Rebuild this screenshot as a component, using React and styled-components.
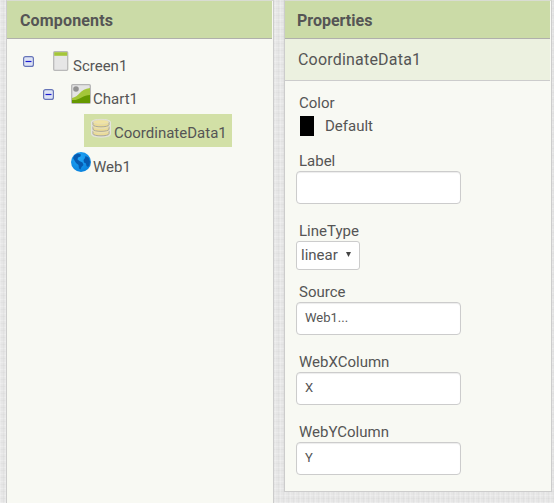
import React from "react";
import styled, { createGlobalStyle } from "styled-components";

const Global = createGlobalStyle`
  * { box-sizing: border-box; }
  body { margin: 0; overflow: hidden; font-family: Roboto, "Liberation Sans", sans-serif; color: #555; }
`;

const Page = styled.div`
  display: grid;
  grid-template-columns: 268px 268px;
  column-gap: 10px;
  align-items: start;
  width: 554px;
  height: 503px;
  overflow: hidden;
  padding-left: 6px;
  background-color: #e6e6e6;
  background-image:
    repeating-linear-gradient(90deg, rgba(255,255,255,.22) 0 1px, transparent 1px 3px, rgba(190,190,190,.12) 3px 4px, transparent 4px 5px),
    repeating-linear-gradient(0deg, rgba(255,255,255,.22) 0 1px, transparent 1px 4px, rgba(190,190,190,.12) 4px 5px, transparent 5px 7px);
`;

const Panel = styled.section`
  height: ${(p) => p.$height}px;
  background: #f8f9f3;
  border: 1px solid #ccc;
  border-top-color: #d9dcd2;
  padding-right: 1px;
`;

const Header = styled.h2`
  margin: 0;
  height: 38px;
  padding-left: ${(p) => p.$inset || 12}px;
  background: #cbdba7;
  border-bottom: 1px solid #b0b0ac;
  font-size: 16px;
  font-weight: 700;
  line-height: 39px;
  letter-spacing: ${(p) => p.$spacing || 0}px;
`;

const Subheader = styled.div`
  height: 42px;
  padding-left: 13px;
  background: #ecf1e0;
  border-bottom: 1px solid #ccc;
  font-size: 16px;
  line-height: 42px;
  letter-spacing: 0.2px;
`;

const Tree = styled.div`
  padding-top: 7px;
`;

const Node = styled.div`
  display: flex;
  align-items: flex-start;
  height: ${(p) => p.$height || 33}px;
  padding-left: ${(p) => p.$indent}px;
`;

const Toggle = styled.svg`
  width: 11px;
  height: 11px;
  margin: 10px 11px 0 0;
`;

const Item = styled.div`
  display: flex;
  height: 33px;
  padding: ${(p) => (p.$selected ? "4px 5px 0 7px" : "5px 6px 0")};
  background: ${(p) => (p.$selected ? "#d2e0a6" : "transparent")};
`;

const Icon = styled.svg`
  width: 20px;
  height: 20px;
  flex: none;
`;

const NodeName = styled.span`
  padding: 5px 0 0 ${(p) => p.$gap || 2}px;
  font-size: 15px;
  line-height: 20px;
`;

const Form = styled.div`
  padding: 14px 0 0 11px;
`;

const Field = styled.div`
  height: ${(p) => p.$height}px;
`;

const Label = styled.label`
  display: block;
  padding-left: 3px;
  height: 18px;
  font-size: 15px;
  line-height: 16px;
`;

const ColorValue = styled.div`
  display: flex;
  align-items: center;
  height: 26px;
  gap: 11px;
  padding-left: 4px;
  font-size: 15px;
`;

const Swatch = styled.span`
  width: 14px;
  height: 20px;
  background: #000;
`;

const Input = styled.div`
  width: 165px;
  height: 33px;
  padding-left: 8px;
  background: #fff;
  border: 1px solid #ccc;
  border-radius: 4px;
  box-shadow: inset 0 1px 1px rgba(0, 0, 0, 0.075);
  font-size: 13px;
  line-height: 29px;
`;

const Select = styled.div`
  display: flex;
  align-items: center;
  width: 64px;
  height: 29px;
  padding: 0 0 2px 4px;
  gap: 8px;
  background: #fff;
  border: 1px solid #ccc;
  border-radius: 3px;
  font-size: 15px;
`;

const Arrow = styled.svg`
  width: 5px;
  height: 5px;
`;

const Collapse = () => (
  <Toggle viewBox="0 0 11 11">
    <rect x="0.6" y="0.6" width="9.8" height="9.8" rx="2" fill="#dde3f4" stroke="#6674b8" strokeWidth="1.2" />
    <path d="M2.5 5.5h6" stroke="#1c1cd0" strokeWidth="1.2" />
  </Toggle>
);

const ScreenIcon = () => (
  <Icon viewBox="0 0 20 20">
    <rect x="2.7" y="0.7" width="14" height="18.6" rx="1" fill="#e6e6e6" stroke="#b9b9b9" strokeWidth="1.3" />
    <path d="M3.2 1.2h13v3.6h-13z" fill="#a4c639" />
  </Icon>
);

const ChartIcon = () => (
  <Icon viewBox="0 0 20 20">
    <rect x="0.7" y="0.7" width="18.6" height="18.6" rx="1" fill="#e4e4e4" stroke="#b5b5b5" strokeWidth="1.3" />
    <circle cx="5" cy="5" r="2.8" fill="#929292" />
    <path d="M1 14C8 13 9 5 19 4v15H1z" fill="#a4c639" />
    <path d="M1 19v-3c7 1 11-5 18-5v8z" fill="#669900" />
  </Icon>
);

const DataIcon = () => (
  <Icon viewBox="0 0 20 20">
    <path d="M.5 4C.5.5 19.500.5 19.500 4v12.500c0 3.500-19 3.500-19 0z" fill="#dddcd0" stroke="#e4e4de" />
    {[13, 8.5, 4].map((y) => (
      <g key={y}>
        <path d={`M2 ${y}v2.600c0 3 16 3 16 0v-2.600z`} fill="#ecdc94" stroke="#aaa89c" strokeWidth="1" />
        <ellipse cx="10" cy={y} rx="8" ry="2.2" fill="#f0e3a2" stroke="#dcd9c8" strokeWidth="0.6" />
      </g>
    ))}
  </Icon>
);

const WebIcon = () => (
  <Icon viewBox="0 0 20 20">
    <defs>
      <radialGradient id="ocean" cx="0.4" cy="0.3" r="0.75">
        <stop offset="0" stopColor="#22a8f8" />
        <stop offset="1" stopColor="#0880dc" />
      </radialGradient>
    </defs>
    <circle cx="10" cy="10" r="10" fill="url(#ocean)" />
    <path
      d="M2 6l1.500-3 3.500-1.500 3 1-.5 2-2.500 1-.5 2 2 1.500 3 1.500 1 2.500-2 2-1 2.500-1.500-1-.5-3.500-2.500-2-1.500-2.500zM14.500 4l3 1.500 1.500 4-.5 3.500-1.500 2-1.500-1-.5-2.500-2-1-.5-2.500 1.500-2z"
      fill="#075bb0"
    />
  </Icon>
);

export default function App() {
  return (
    <>
      <Global />
      <Page>
        <Panel $height={520}>
          <Header $inset={13} $spacing={0.15}>Components</Header>
          <Tree>
            <Node $indent={16}><Collapse /><Item><ScreenIcon /><NodeName>Screen1</NodeName></Item></Node>
            <Node $indent={36} $height={35}><Collapse /><Item><ChartIcon /><NodeName>Chart1</NodeName></Item></Node>
            <Node $indent={77}><Item $selected><DataIcon /><NodeName $gap={3}>CoordinateData1</NodeName></Item></Node>
            <Node $indent={58}><Item><WebIcon /><NodeName>Web1</NodeName></Item></Node>
          </Tree>
        </Panel>
        <Panel $height={492}>
          <Header>Properties</Header>
          <Subheader>CoordinateData1</Subheader>
          <Form>
            <Field $height={58}><Label>Color</Label><ColorValue><Swatch />Default</ColorValue></Field>
            <Field $height={70}><Label>Label</Label><Input /></Field>
            <Field $height={61}>
              <Label>LineType</Label>
              <Select>linear<Arrow viewBox="0 0 5 5"><path d="M0 0h5L2.5 5z" fill="#444" /></Arrow></Select>
            </Field>
            <Field $height={70}><Label>Source</Label><Input>Web1...</Input></Field>
            <Field $height={70}><Label>WebXColumn</Label><Input>X</Input></Field>
            <Field $height={70}><Label>WebYColumn</Label><Input>Y</Input></Field>
          </Form>
        </Panel>
      </Page>
    </>
  );
}
